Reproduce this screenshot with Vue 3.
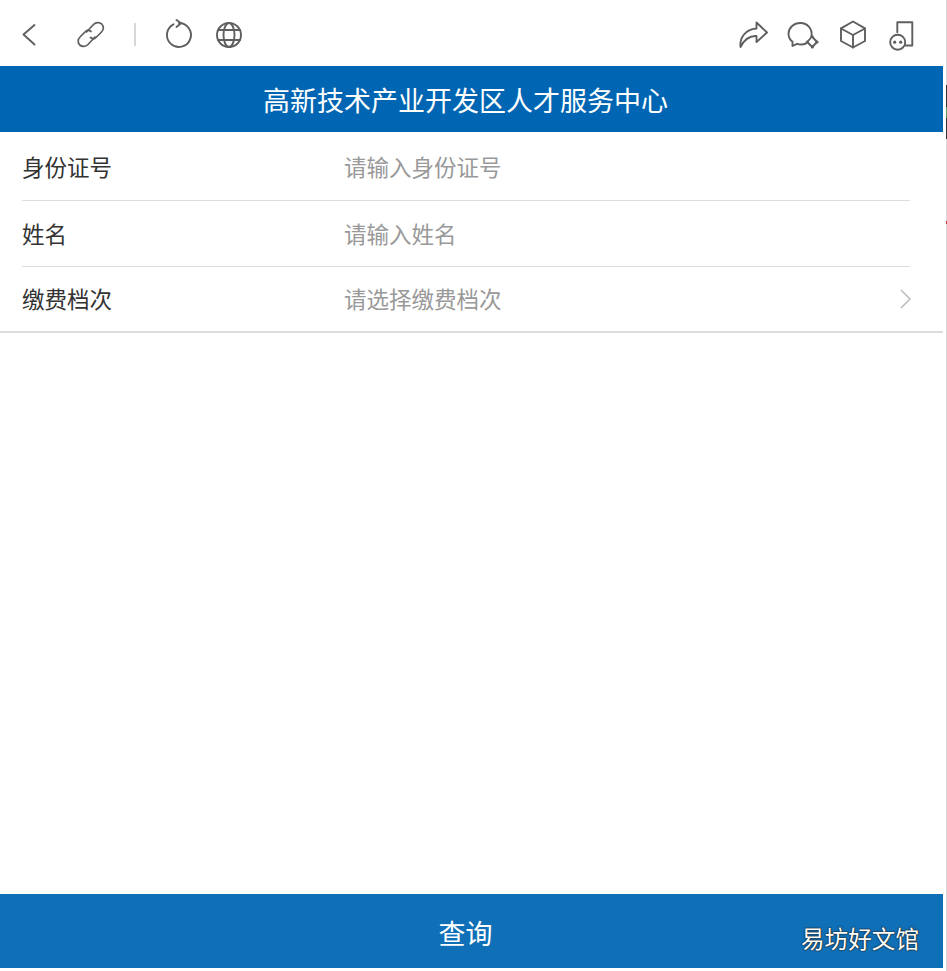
<script setup>
const rows = [
  { label: '身份证号', placeholder: '请输入身份证号' },
  { label: '姓名', placeholder: '请输入姓名' },
  { label: '缴费档次', placeholder: '请选择缴费档次', arrow: true }
]
</script>

<template>
  <div class="shell">
    <div class="page">
      <div class="toolbar">
        <div class="tool-group">
          <svg class="icon back" viewBox="0 0 32 32"><path d="M21.5 6 L10.5 15.5 L21.5 25.5" /></svg>
          <svg class="icon link" viewBox="0 0 32 32">
            <path d="M11.5 13 L18.5 5.5 C20.8 3.2 24.5 3 26.7 5 C29 7.2 28.8 10.8 26.5 13 L21 18.5 C19.5 20 17.3 20 15.5 18.5" />
            <path d="M20 18 L13 25.5 C10.8 27.8 7 28 4.8 26 C2.5 23.8 2.7 20.2 5 18 L10.5 12.5 C12 11 14.2 11 16 12.5" />
          </svg>
          <span class="sep"></span>
          <svg class="icon reload" viewBox="0 0 32 32">
            <path d="M16 4 A12 12 0 1 1 10.5 5.3" />
            <path d="M13.5 1 L18 4.2 L13.5 8" />
          </svg>
          <svg class="icon globe" viewBox="0 0 32 32">
            <circle cx="16" cy="16" r="12" />
            <ellipse cx="16" cy="16" rx="5.5" ry="12" />
            <path d="M5 11 H27 M5 21 H27" />
          </svg>
        </div>
        <div class="tool-group right">
          <svg class="icon" viewBox="0 0 32 32">
            <path d="M3.5 28 C2.5 19 8 10.5 19.5 9.5 L19.5 3.5 L30 13.5 L19.5 23 L19.5 17 C12 16.5 7 21 3.5 28 Z" />
          </svg>
          <svg class="icon" viewBox="0 0 32 32">
            <path d="M24.5 17 C25.6 10 20.5 4 13.5 4 C6.5 4 1.5 9 1.5 14.7 C1.5 18 3 20.8 5.5 22.7 L5.5 27 L10 24.8 C13 25.8 16.5 25.5 19 24.5" />
            <path d="M25 17.5 L30 23 L25.3 28 L20.3 23 Z" />
            <circle class="dot" cx="25" cy="17.5" r="1.6" />
            <circle class="dot" cx="30" cy="23" r="1.6" />
            <circle class="dot" cx="25.3" cy="28" r="1.6" />
            <circle class="dot" cx="20.3" cy="23" r="1.6" />
          </svg>
          <svg class="icon" viewBox="0 0 32 32">
            <path d="M16 2.5 L28 9.3 L28 22 L16 28.5 L4 22 L4 9.3 Z" />
            <path d="M4 9.5 L16 16 L28 9.5 M16 16 V28.5" />
          </svg>
          <svg class="icon" viewBox="0 0 32 32">
            <path d="M10.3 13.2 V3.2 H25.3 V26.5 H18" />
            <circle cx="10.7" cy="23.2" r="7.5" />
            <circle class="dot" cx="7.7" cy="23.2" r="1.6" />
            <circle class="dot" cx="13.7" cy="23.2" r="1.6" />
          </svg>
        </div>
      </div>

      <div class="title">高新技术产业开发区人才服务中心</div>

      <div class="form">
        <div v-for="row in rows" :key="row.label" class="row">
          <div class="row-inner">
            <label class="label">{{ row.label }}</label>
            <span class="value">{{ row.placeholder }}</span>
            <svg v-if="row.arrow" class="arrow" viewBox="0 0 14 22"><path d="M2 2 L11 11 L2 20" /></svg>
          </div>
        </div>
      </div>

      <div class="spacer"></div>

      <div class="submit">
        <span>查询</span>
        <span class="watermark">易坊好文馆</span>
      </div>
    </div>
    <div class="edge"></div>
  </div>
</template>

<style scoped>
.shell { display: flex; width: 947px; height: 971px; }
.page {
  width: 943px;
  height: 968px;
  display: flex;
  flex-direction: column;
  background: #fff;
  font-family: "Noto Sans CJK SC", "Liberation Sans", sans-serif;
}
/* sliver of the window behind, on the right */
.edge {
  width: 1px;
  margin-left: 3px;
  background: linear-gradient(to bottom, #d8d8d8 0 85px, #333 85px 107px, #5a9a5a 107px 118px, #333 118px 139px, #d8d8d8 139px 221px, #c33 221px 224px, #d8d8d8 224px);
}
.toolbar {
  height: 66px;
  padding: 3px 24px 0 13px;
  display: flex;
  justify-content: space-between;
  align-items: center;
  box-sizing: border-box;
}
.tool-group { display: flex; align-items: center; }
.icon {
  width: 32px;
  height: 32px;
  fill: none;
  stroke: #5f5f5f;
  stroke-width: 1.9;
  stroke-linejoin: round;
  stroke-linecap: round;
}
.icon .dot { fill: #5f5f5f; stroke: none; }
.back { margin-right: 30px; }
.link { margin-right: 27px; stroke-width: 1.7; }
.sep { width: 2px; height: 23px; background: #d8d8d8; margin-right: 27px; }
.reload { margin-right: 18px; }
.right { gap: 18px; }
.title {
  height: 66px;
  line-height: 68px;
  padding-right: 12px;
  background: #0066b3;
  color: #fff;
  text-align: center;
  font-size: 27px;
}
.form { border-bottom: 2px solid #ddd; }
.row { padding-left: 22px; padding-right: 33px; }
.row-inner {
  height: 66px;
  box-sizing: border-box;
  padding-bottom: 2px;
  display: flex;
  align-items: center;
  border-bottom: 1px solid #ddd;
  position: relative;
  font-size: 22.5px;
}
.row:first-child .row-inner { height: 69px; padding-bottom: 0; }
.row:last-child .row-inner { height: 64px; border-bottom: none; }
.label { width: 322px; color: #333; }
.value { color: #999; }
.arrow {
  position: absolute;
  right: -3px;
  top: 50%;
  margin-top: -11px;
  width: 14px;
  height: 22px;
  fill: none;
  stroke: #bbb;
  stroke-width: 1.5;
}
.spacer { flex: 1; }
.submit {
  height: 74px;
  box-sizing: border-box;
  padding: 2px 12px 0 0;
  background: #0f70b7;
  color: #fff;
  font-size: 27px;
  display: flex;
  align-items: center;
  justify-content: center;
  position: relative;
}
.watermark {
  position: absolute;
  right: 24px;
  top: 28px;
  font-size: 23.6px;
  line-height: 32px;
  text-shadow: 0 0 2px #222, 0 0 1px #222, 0 0 1px #222;
}
</style>

<style>
html, body { background: #fff; }
</style>
